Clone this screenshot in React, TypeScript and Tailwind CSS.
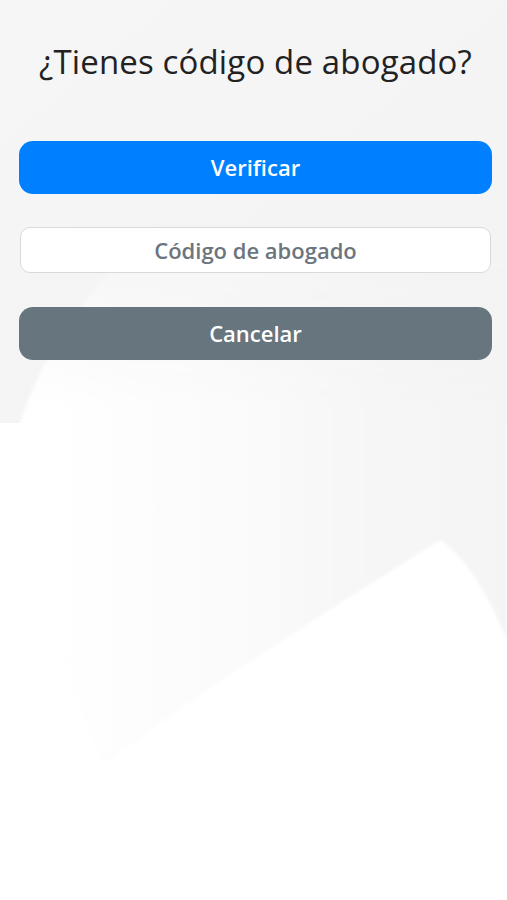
import React from "react";

export default function App() {
  return (
    <div className="relative w-[507px] h-[900px] bg-white overflow-hidden" style={{ fontFamily: '"Open Sans", sans-serif' }}>
      <svg className="absolute left-0 top-0" width="507" height="900" viewBox="0 0 507 900">
        <defs>
          <linearGradient id="g1" x1="0" y1="0" x2="1" y2="1">
            <stop offset="0" stopColor="#f6f6f6" />
            <stop offset="1" stopColor="#f3f3f3" />
          </linearGradient>
          <linearGradient id="g2" x1="0" y1="0" x2="1" y2="0">
            <stop offset="0" stopColor="#ffffff" />
            <stop offset="0.35" stopColor="#fcfcfc" />
            <stop offset="0.75" stopColor="#f6f6f6" />
            <stop offset="1" stopColor="#f4f4f4" />
          </linearGradient>
          <linearGradient id="mg" gradientUnits="userSpaceOnUse" x1="0" y1="230" x2="0" y2="400">
            <stop offset="0" stopColor="#000" />
            <stop offset="1" stopColor="#fff" />
          </linearGradient>
          <mask id="m1">
            <rect x="0" y="0" width="507" height="900" fill="url(#mg)" />
          </mask>
          <filter id="blur" x="-20%" y="-20%" width="140%" height="140%">
            <feGaussianBlur stdDeviation="1.5" />
          </filter>
        </defs>
        <rect x="0" y="0" width="507" height="423" fill="url(#g1)" />
        <g filter="url(#blur)">
          <path
            d="M20 423 C 40 360, 80 300, 130 250 L 507 160 L 507 640 C 490 600, 470 560, 440 540 C 330 610, 200 690, 105 765 C 70 700, 40 600, 20 423 Z"
            fill="url(#g2)"
            mask="url(#m1)"
          />
        </g>
      </svg>
      <div className="relative flex flex-col pl-[19px] pr-[15px] pt-[40px]">
        <h1 className="text-center text-[33px] leading-[44px] text-[#222222] font-normal tracking-[0.15px]">¿Tienes código de abogado?</h1>
        <button className="mt-[57px] h-[53px] w-full rounded-[14px] bg-[#007fff] text-white text-[22px] font-semibold">
          Verificar
        </button>
        <div className="mt-[33px] mx-px h-[46px] rounded-[10px] border border-[#d9d9d9] bg-white flex items-center justify-center text-[22px] font-semibold text-[#6c757d]">
          Código de abogado
        </div>
        <button className="mt-[34px] h-[53px] w-full rounded-[14px] bg-[#67757e] text-white text-[22px] font-semibold">
          Cancelar
        </button>
      </div>
    </div>
  );
}
